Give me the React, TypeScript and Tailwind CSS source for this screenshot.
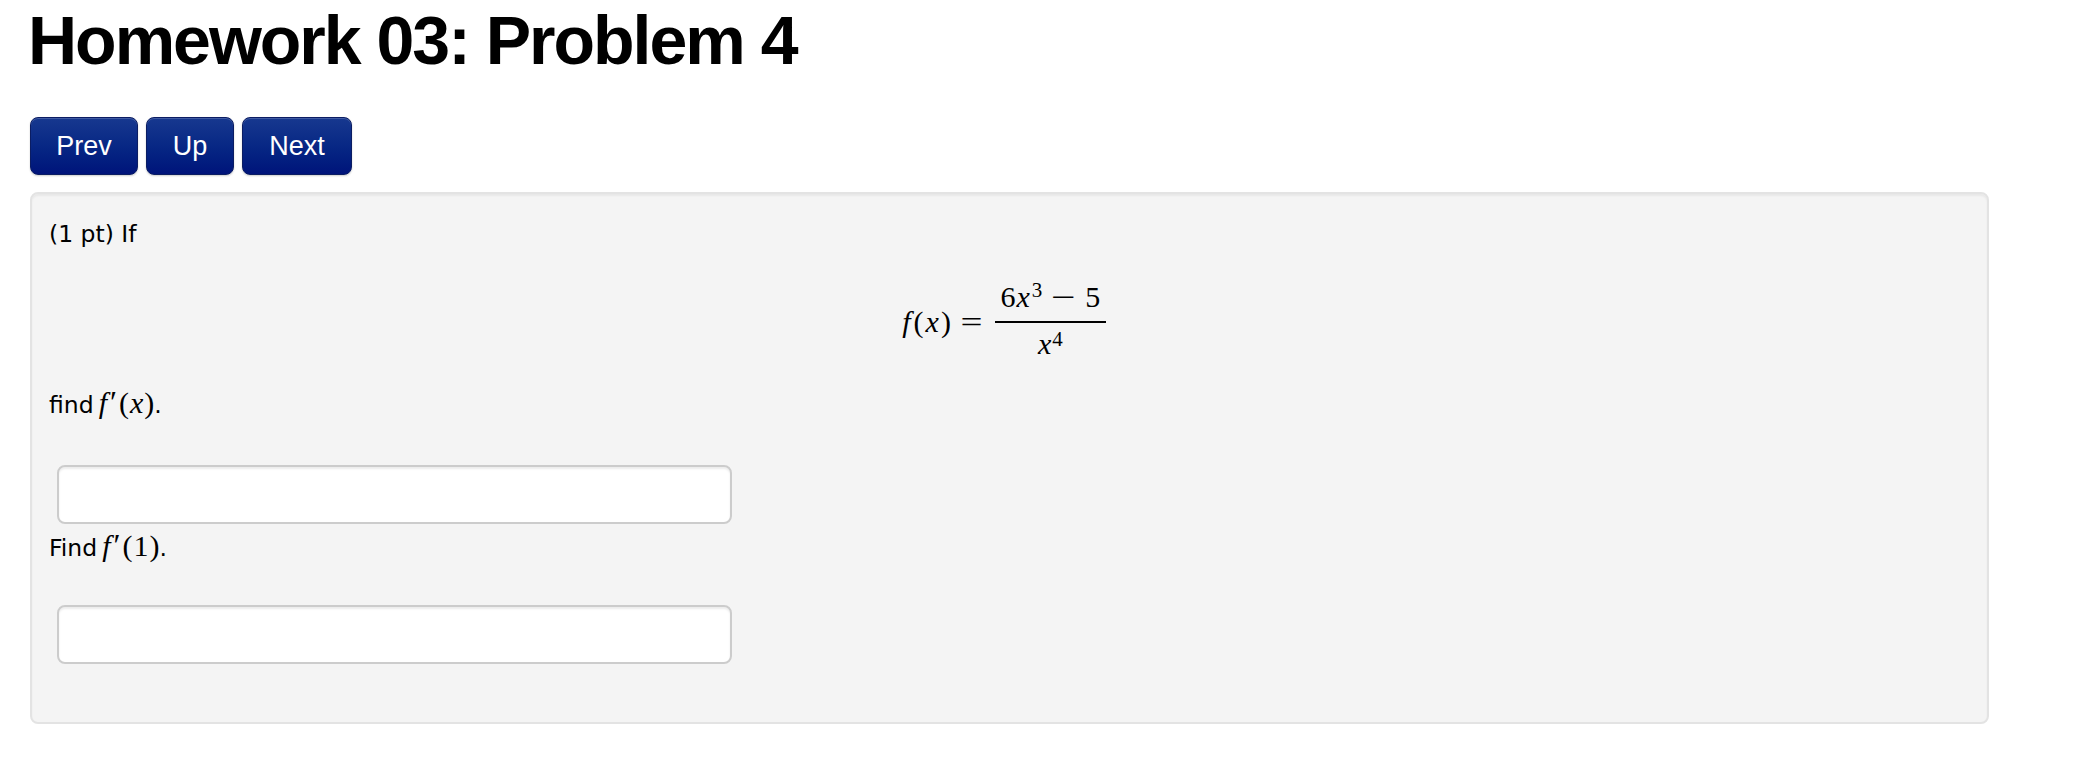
import React from "react";

const sans = { fontFamily: '"DejaVu Sans", Verdana, sans-serif' };

function NavButton({ label, width }: { label: string; width: string }) {
  return (
    <button
      className={`${width} h-[58px] flex items-center justify-center rounded-[8px] border border-[#0b1d63] bg-gradient-to-b from-[#17388f] to-[#00137a] text-white text-[27px] font-['Liberation_Sans',Arial,sans-serif] shadow-[inset_0_1px_0_rgba(255,255,255,0.18),0_1px_2px_rgba(0,0,0,0.2)]`}
    >
      {label}
    </button>
  );
}

// f'(...) written inline, serif italic like the rendered TeX
function FPrime({ arg, italicArg }: { arg: string; italicArg?: boolean }) {
  return (
    <span className="font-['Liberation_Serif','Times_New_Roman',serif] text-[30px] leading-none ml-[5px]">
      <i>f</i>
      <span className="inline-block ml-[3px] mr-[2px] text-[32px] leading-none">′</span>
      <span>(</span>
      {italicArg ? <i className="mx-[1px]">{arg}</i> : <span className="mx-[1px]">{arg}</span>}
      <span>)</span>
    </span>
  );
}

function Equation() {
  return (
    <div className="mt-[23px] flex justify-center pr-[12px] font-['Liberation_Serif','Times_New_Roman',serif] text-[30px] text-black">
      <div className="flex items-start">
        {/* left side f(x) = */}
        <div className="mt-[25px] leading-[36px] whitespace-nowrap">
          <i className="mr-[3px] ml-[1px]">f</i>
          <span>(</span>
          <i className="mx-[2px]">x</i>
          <span>)</span>
          <span className="inline-block ml-[12px] mr-[15px] scale-x-[1.3]">=</span>
        </div>
        {/* fraction */}
        <div className="flex flex-col items-center w-[111px]">
          <div className="leading-[36px] mb-[6px] whitespace-nowrap">
            <span>6</span>
            <i className="ml-[1px]">x</i>
            <span className="text-[21px] leading-none align-[10px] ml-[2px]">3</span>
            <span className="inline-block leading-none mx-[13px] scale-x-[1.45]">−</span>
            <span>5</span>
          </div>
          <div className="h-[2px] w-full bg-black" />
          <div className="leading-[36px] mt-[3px] whitespace-nowrap">
            <i>x</i>
            <span className="text-[21px] leading-none align-[8px] ml-[1px]">4</span>
          </div>
        </div>
      </div>
    </div>
  );
}

export default function App() {
  return (
    <div className="min-h-screen bg-white px-[30px] text-black">
      <h1 className="mt-[6px] -ml-[2px] text-[68px] leading-[68px] font-bold tracking-[-2px] font-['Liberation_Sans',Arial,sans-serif]">
        Homework 03: Problem 4
      </h1>

      <div className="mt-[43px] flex gap-[8px]">
        <NavButton label="Prev" width="w-[108px]" />
        <NavButton label="Up" width="w-[88px]" />
        <NavButton label="Next" width="w-[110px]" />
      </div>

      <div
        className="mt-[17px] w-[1959px] rounded-[8px] border-2 border-[#e3e3e3] bg-[#f4f4f4] px-[17px] pt-[17px] pb-[58px] shadow-[inset_0_2px_2px_rgba(0,0,0,0.05)] text-[23.5px] leading-[44px]"
        style={sans}
      >
        <div className="mt-[1px]">(1 pt) If</div>

        <Equation />

        <div className="mt-[21px] whitespace-nowrap">
          find
          <FPrime arg="x" italicArg />
          <span>.</span>
        </div>

        <input
          type="text"
          className="mt-[38px] ml-[8px] block h-[59px] w-[675px] rounded-[8px] border-2 border-[#cccccc] bg-white shadow-[inset_0_2px_2px_rgba(0,0,0,0.075)] outline-none"
        />

        <div className="mt-[2px] whitespace-nowrap">
          Find
          <FPrime arg="1" />
          <span>.</span>
        </div>

        <input
          type="text"
          className="mt-[35px] ml-[8px] block h-[59px] w-[675px] rounded-[8px] border-2 border-[#cccccc] bg-white shadow-[inset_0_2px_2px_rgba(0,0,0,0.075)] outline-none"
        />
      </div>
    </div>
  );
}
